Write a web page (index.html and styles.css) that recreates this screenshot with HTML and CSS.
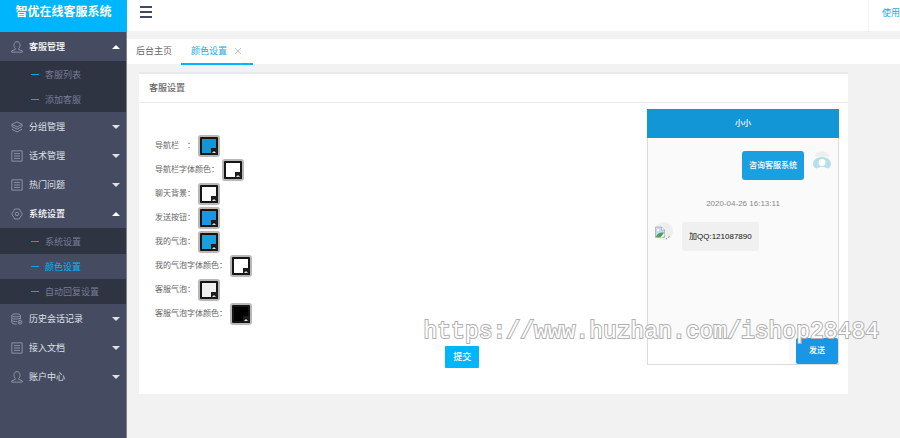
FILE: index.html
```
<!DOCTYPE html>
<html lang="zh-CN">
<head>
    <meta charset="UTF-8">
    <meta name="viewport" content="width=device-width, initial-scale=1.0">
    <title>智优在线客服系统</title>
    <link rel="stylesheet" href="styles.css">
</head>
<body>
    <!-- icon set for the side menu -->
    <svg class="sprite" aria-hidden="true">
        <symbol id="i-user" viewBox="0 0 14 14"><path d="M5 8.600C2.700 7 2.700 .8 7 .8S11.300 7 9 8.600V9.800L13.200 11.500V13H.8V11.500L5 9.800Z"/></symbol>
        <symbol id="i-layers" viewBox="0 0 14 14"><path d="M7 1L13 4 7 7 1 4ZM1 6.500L7 9.500 13 6.500M1 9.500L7 12.800 13 9.500M1 4V6M13 4V6"/></symbol>
        <symbol id="i-doc" viewBox="0 0 14 14"><path d="M1 1H13V13H1ZM3.500 4.200H10.500M3.500 7H10.500M3.500 9.800H10.500"/></symbol>
        <symbol id="i-gear" viewBox="0 0 14 14"><path d="M4.300 1.200H9.700L10.800 3.200 13.200 7 10.800 10.800 9.700 12.800H4.300L3.200 10.800 .8 7 3.200 3.200Z"/><circle cx="7" cy="7" r="2"/></symbol>
        <symbol id="i-db" viewBox="0 0 14 14"><ellipse cx="6" cy="2.800" rx="5" ry="1.800"/><path d="M1 2.800V11C1 12.200 3 13 6.500 13M11 2.800V7.500M1 5.700C1.500 7.600 10.500 7.600 11 5.700M1 8.500C1.500 10 5 10.200 7 9.800"/><circle cx="10.500" cy="10.800" r="2.200"/><circle cx="10.500" cy="10.800" r=".5"/></symbol>
    </svg>

    <div class="layout">
        <aside class="sidebar">
            <h1 class="logo">智优在线客服系统</h1>
            <nav>
                <a class="item open" href="#"><svg class="icon"><use href="#i-user"/></svg>客服管理<i class="caret"></i></a>
                <div class="submenu">
                    <a href="#">客服列表</a>
                    <a href="#">添加客服</a>
                </div>
                <a class="item" href="#"><svg class="icon"><use href="#i-layers"/></svg>分组管理<i class="caret"></i></a>
                <a class="item" href="#"><svg class="icon"><use href="#i-doc"/></svg>话术管理<i class="caret"></i></a>
                <a class="item" href="#"><svg class="icon"><use href="#i-doc"/></svg>热门问题<i class="caret"></i></a>
                <a class="item open" href="#"><svg class="icon"><use href="#i-gear"/></svg>系统设置<i class="caret"></i></a>
                <div class="submenu">
                    <a href="#">系统设置</a>
                    <a class="active" href="#">颜色设置</a>
                    <a href="#">自动回复设置</a>
                </div>
                <a class="item" href="#"><svg class="icon"><use href="#i-db"/></svg>历史会话记录<i class="caret"></i></a>
                <a class="item" href="#"><svg class="icon"><use href="#i-doc"/></svg>接入文档<i class="caret"></i></a>
                <a class="item" href="#"><svg class="icon"><use href="#i-user"/></svg>账户中心<i class="caret"></i></a>
            </nav>
        </aside>

        <div class="main">
            <header class="topbar">
                <button class="menu-btn" type="button" aria-label="菜单"><i></i><i></i><i></i></button>
                <a class="help" href="#">使用</a>
            </header>

            <div class="tabs">
                <a class="tab" href="#">后台主页</a>
                <div class="tab active">
                    <a href="#">颜色设置</a>
                    <button class="close" type="button" aria-label="关闭"><svg viewBox="0 0 8 8"><path d="M1 1L7 7M7 1L1 7"/></svg></button>
                </div>
            </div>

            <section class="panel">
                <h2 class="panel-title">客服设置</h2>
                <div class="panel-body">
                    <form class="colors">
                        <div class="row">
                            <label for="nav">导航栏　：</label>
                            <span class="picker"><input type="color" id="nav" value="#1296d6"></span>
                        </div>
                        <div class="row">
                            <label for="nav_text">导航栏字体颜色：</label>
                            <span class="picker"><input type="color" id="nav_text" value="#ffffff"></span>
                        </div>
                        <div class="row">
                            <label for="chat_bg">聊天背景：</label>
                            <span class="picker"><input type="color" id="chat_bg" value="#fafafa"></span>
                        </div>
                        <div class="row">
                            <label for="send_btn">发送按钮：</label>
                            <span class="picker"><input type="color" id="send_btn" value="#1a96e6"></span>
                        </div>
                        <div class="row">
                            <label for="my_bubble">我的气泡：</label>
                            <span class="picker"><input type="color" id="my_bubble" value="#1a9fe0"></span>
                        </div>
                        <div class="row">
                            <label for="my_text">我的气泡字体颜色：</label>
                            <span class="picker"><input type="color" id="my_text" value="#ffffff"></span>
                        </div>
                        <div class="row">
                            <label for="kf_bubble">客服气泡：</label>
                            <span class="picker"><input type="color" id="kf_bubble" value="#f0f0f0"></span>
                        </div>
                        <div class="row">
                            <label for="kf_text">客服气泡字体颜色：</label>
                            <span class="picker"><input type="color" id="kf_text" value="#000000"></span>
                        </div>
                        <button class="submit" type="button">提交</button>
                    </form>

                    <div class="chat">
                        <div class="chat-head">小小</div>
                        <div class="messages">
                            <div class="msg mine">
                                <div class="bubble">咨询客服系统</div>
                                <svg class="avatar" viewBox="0 0 18 18">
                                    <path d="M1 5.500A9 9 0 0 1 17 5.500Z" fill="#eee"/>
                                    <path d="M0 13C0 3.500 18 3.500 18 13C18 16 16 17 14.500 17.500C12 15.500 6 15.500 3.500 17.500C2 17 0 16 0 13Z" fill="#b5dfe9"/>
                                    <circle cx="9" cy="11.500" r="3.500" fill="#fff"/>
                                </svg>
                            </div>
                            <div class="time">2020-04-26 16:13:11</div>
                            <div class="msg">
                                <svg class="avatar" viewBox="0 0 18 18">
                                    <circle cx="9" cy="9" r="9" fill="#eee"/>
                                    <path d="M.5 5H6.500L9.500 8V15.500H.5Z" fill="#c7d9f2" stroke="#a0a5ad" stroke-width=".7"/>
                                    <path d="M6.500 5V8H9.500" fill="#fff" stroke="#a0a5ad" stroke-width=".7"/>
                                    <circle cx="3" cy="8" r="1.200" fill="#fff"/>
                                    <path d="M1 15C2 11 6 10 9 10.500L6 15Z" fill="#4fa83d"/>
                                    <path d="M5.500 15.500L9.500 11.500V13L7 15.500Z" fill="#fff"/>
                                    <path d="M11 16.500L12 17M13 15.500L14.500 14.500" stroke="#777" stroke-width=".8"/>
                                </svg>
                                <div class="bubble">加QQ:121087890</div>
                            </div>
                        </div>
                        <div class="chat-foot">
                            <input type="text" aria-label="消息">
                            <button class="send" type="button">发送</button>
                        </div>
                    </div>
                </div>
            </section>
        </div>
    </div>

    <div class="watermark">https://www.huzhan.com/ishop28484</div>
</body>
</html>
```
FILE: styles.css
```
* {
    box-sizing: border-box;
}
body {
    margin: 0;
    font: 9px/12px "Liberation Sans", "Noto Sans CJK SC", sans-serif;
    color: #666;
    background: #f2f2f2;
    overflow: hidden;
}
a {
    color: inherit;
    text-decoration: none;
}
button {
    padding: 0;
    border: none;
    font: inherit;
    cursor: pointer;
}
.sprite {
    display: none;
}
.layout {
    display: flex;
    min-height: 100vh;
}

/* side menu */
.sidebar {
    width: 127px;
    flex-shrink: 0;
    background: #454c62;
    border-right: 1px solid #7d8292;
}
.logo {
    margin: 0 -1px 0 0;
    height: 32px;
    padding-top: 4px;
    background: #01b5fd;
    color: #fff;
    font-size: 12px;
    line-height: 16px;
    text-align: center;
}
.item {
    display: flex;
    align-items: center;
    gap: 6px;
    height: 29px;
    padding: 0 6px 0 11px;
    color: #dfe1e6;
}
.item.open {
    color: #fff;
    font-weight: 500;
}
.icon {
    width: 12px;
    height: 12px;
    fill: none;
    stroke: #979db0;
}
.caret {
    margin-left: auto;
    border: 4px solid transparent;
    border-top-color: #dfe1e6;
    border-bottom-width: 0;
}
.open .caret {
    border-top-width: 0;
    border-bottom: 4px solid #fff;
}
.submenu {
    padding-top: 1px;
    background: #2f3443;
    color: #767d96;
}
.submenu a {
    display: flex;
    align-items: center;
    gap: 6px;
    height: 25px;
    padding-left: 31px;
}
.submenu a::before {
    content: "";
    width: 8px;
    height: 1px;
    background: #01a8e8;
}
.submenu .active {
    background: #454c62;
    color: #01b5fd;
}

/* top bar and tabs */
.main {
    flex: 1;
    min-width: 0;
}
.topbar {
    display: flex;
    justify-content: space-between;
    height: 31px;
    background: #fff;
}
.menu-btn {
    display: flex;
    flex-direction: column;
    gap: 3px;
    width: 12px;
    margin: 6px 13px;
    background: none;
}
.menu-btn i {
    width: 12px;
    height: 2px;
    background: #414960;
}
.help {
    padding: 7px 0 0 13px;
    border-left: 1px solid #f6f6f6;
    color: #1fa9e8;
}
.tabs {
    display: flex;
    height: 26px;
    margin-top: 8px;
    background: linear-gradient(#fff 25px, #f2f2f2 25px);
    line-height: 25px;
}
.tab {
    padding: 0 9px;
}
.tab.active {
    display: flex;
    align-items: center;
    gap: 6px;
    padding: 0 10px;
    border-bottom: 2px solid #01b5fd;
    color: #1fa9e8;
}
.close {
    display: flex;
    width: 10px;
    height: 8px;
    justify-content: center;
    background: none;
}
.close svg {
    width: 8px;
    stroke: #c4c4c4;
}

/* settings panel */
.panel {
    margin: 7px 52px 0 12px;
    border-top: 2px solid #e6e8eb;
    background: #fff;
}
.panel-title {
    margin: 0;
    padding: 0 10px;
    border-bottom: 1px solid #ececec;
    font-size: 9px;
    line-height: 28px;
    font-weight: 500;
}
.panel-body {
    display: flex;
    align-items: flex-start;
    padding: 6px 9px 26px 16px;
}
.colors {
    flex: 1;
    padding-top: 25px;
    font-size: 8px;
}
.row {
    display: flex;
    align-items: center;
    gap: 3px;
    height: 24px;
}
.picker {
    position: relative;
    width: 22px;
    height: 22px;
    border: 2px solid #b8b8b8;
    border-radius: 3px;
    background: #b8b8b8;
}
.picker input {
    display: block;
    width: 18px;
    height: 18px;
    padding: 0;
    border: 2px solid #151515;
    border-radius: 1px;
    background: #151515;
    appearance: none;
}
.picker input::-webkit-color-swatch-wrapper {
    padding: 0;
}
.picker input::-webkit-color-swatch {
    border: none;
}
/* dark corner with the small arrow */
.picker::before {
    content: "";
    position: absolute;
    right: 0;
    bottom: 0;
    width: 7px;
    height: 7px;
    background: #1c1c1c;
    pointer-events: none;
}
.picker::after {
    content: "";
    position: absolute;
    right: 2px;
    bottom: 2px;
    border: 2px solid transparent;
    border-top-width: 0;
    border-bottom-color: #ddd;
    pointer-events: none;
}
.submit {
    display: block;
    width: 34px;
    height: 22px;
    margin: 20px 0 0 59%;
    border-radius: 1px;
    background: #01b5fd;
    color: #fff;
    font-size: 9px;
    font-weight: 500;
}

/* chat preview */
.chat {
    width: 192px;
    display: flex;
    flex-direction: column;
    background: #fafafa;
    border: 1px solid #dcdcdc;
    border-top: none;
    font-size: 8px;
}
.chat-head {
    margin: 0 -1px;
    background: #1296d6;
    color: #fff;
    font-weight: 500;
    line-height: 29px;
    text-align: center;
}
.messages {
    height: 200px;
    padding: 13px 7px;
}
.msg {
    display: flex;
    gap: 9px;
}
.mine {
    justify-content: flex-end;
}
.bubble {
    padding: 0 7px;
    border-radius: 3px;
    background: #f0f0f0;
    color: #111;
    line-height: 29px;
}
.mine .bubble {
    background: #1a9fe0;
    color: #fff;
    font-weight: 500;
}
.avatar {
    width: 18px;
    height: 18px;
}
.time {
    margin: 18px 0 12px;
    color: #888;
    text-align: center;
}
.chat-foot {
    display: flex;
    gap: 7px;
    height: 26px;
}
.chat-foot input {
    flex: 1;
    min-width: 0;
    border: none;
    background: #fff;
    outline: none;
}
.send {
    width: 42px;
    border-radius: 2px;
    background: #1a96e6;
    color: #fff;
    font-weight: 500;
}

.watermark {
    position: absolute;
    right: 21px;
    top: 317px;
    color: #fff;
    font: 23px/30px "Liberation Mono", monospace;
    -webkit-text-stroke: 2px #b0b0b0;
    paint-order: stroke fill;
    pointer-events: none;
}
```
